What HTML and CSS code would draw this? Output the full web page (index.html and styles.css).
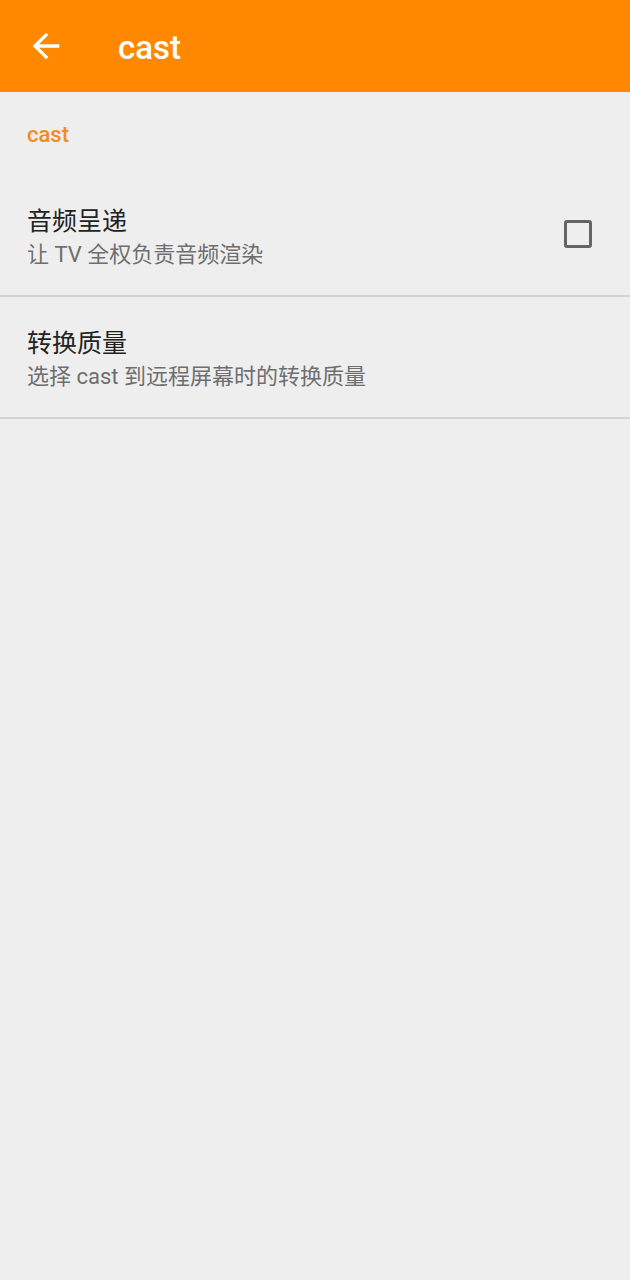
FILE: index.html
```html
<!DOCTYPE html>
<html lang="zh">
<head>
    <meta charset="UTF-8">
    <meta name="viewport" content="width=device-width, initial-scale=1.0">
    <title>cast</title>
    <link rel="stylesheet" href="styles.css">
</head>
<body>

<div class="toolbar">
    <svg class="back-icon" viewBox="0 0 24 24" width="40" height="40">
        <path d="M20 11H7.83l5.59-5.59L12 4l-8 8 8 8 1.41-1.41L7.83 13H20v-2z" fill="#ffffff"/>
    </svg>
    <div class="toolbar-title">cast</div>
</div>

<div class="category">cast</div>

<div class="pref-item">
    <div class="pref-text">
        <div class="pref-title">音频呈递</div>
        <div class="pref-summary">让 TV 全权负责音频渲染</div>
    </div>
    <div class="checkbox"></div>
</div>

<div class="pref-item">
    <div class="pref-text">
        <div class="pref-title">转换质量</div>
        <div class="pref-summary">选择 cast 到远程屏幕时的转换质量</div>
    </div>
</div>

</body>
</html>
```

FILE: styles.css
```css
body {
    margin: 0;
    background-color: #eeeeee;
    font-family: Roboto, "Noto Sans CJK SC", sans-serif;
}

.toolbar {
    height: 92px;
    background-color: #ff8800;
    display: flex;
    align-items: center;
    padding-left: 26px;
}

.back-icon {
    display: block;
    margin-top: -1px;
}

.toolbar-title {
    color: #ffffff;
    font-size: 33px;
    font-weight: 500;
    margin-left: 52px;
    margin-top: 3px;
}

.category {
    color: #f28c1e;
    font-size: 22px;
    font-weight: 500;
    padding: 30px 27px 0;
    height: 53px;
}

.pref-item {
    display: flex;
    align-items: center;
    padding: 0 38px 0 27px;
    height: 120px;
    border-bottom: 2px solid #d3d3d3;
}

.pref-item:first-of-type {
    height: 121px;
}

.pref-text {
    flex: 1;
    padding-top: 6px;
}

.pref-title {
    font-size: 25px;
    color: #222222;
    line-height: 33px;
}

.pref-summary {
    font-size: 22px;
    color: #6e6e6e;
    line-height: 33px;
}

/* unchecked checkbox */
.checkbox {
    width: 22px;
    height: 22px;
    border: 3.5px solid #646464;
    border-radius: 3px;
    margin-bottom: 3px;
}
```
